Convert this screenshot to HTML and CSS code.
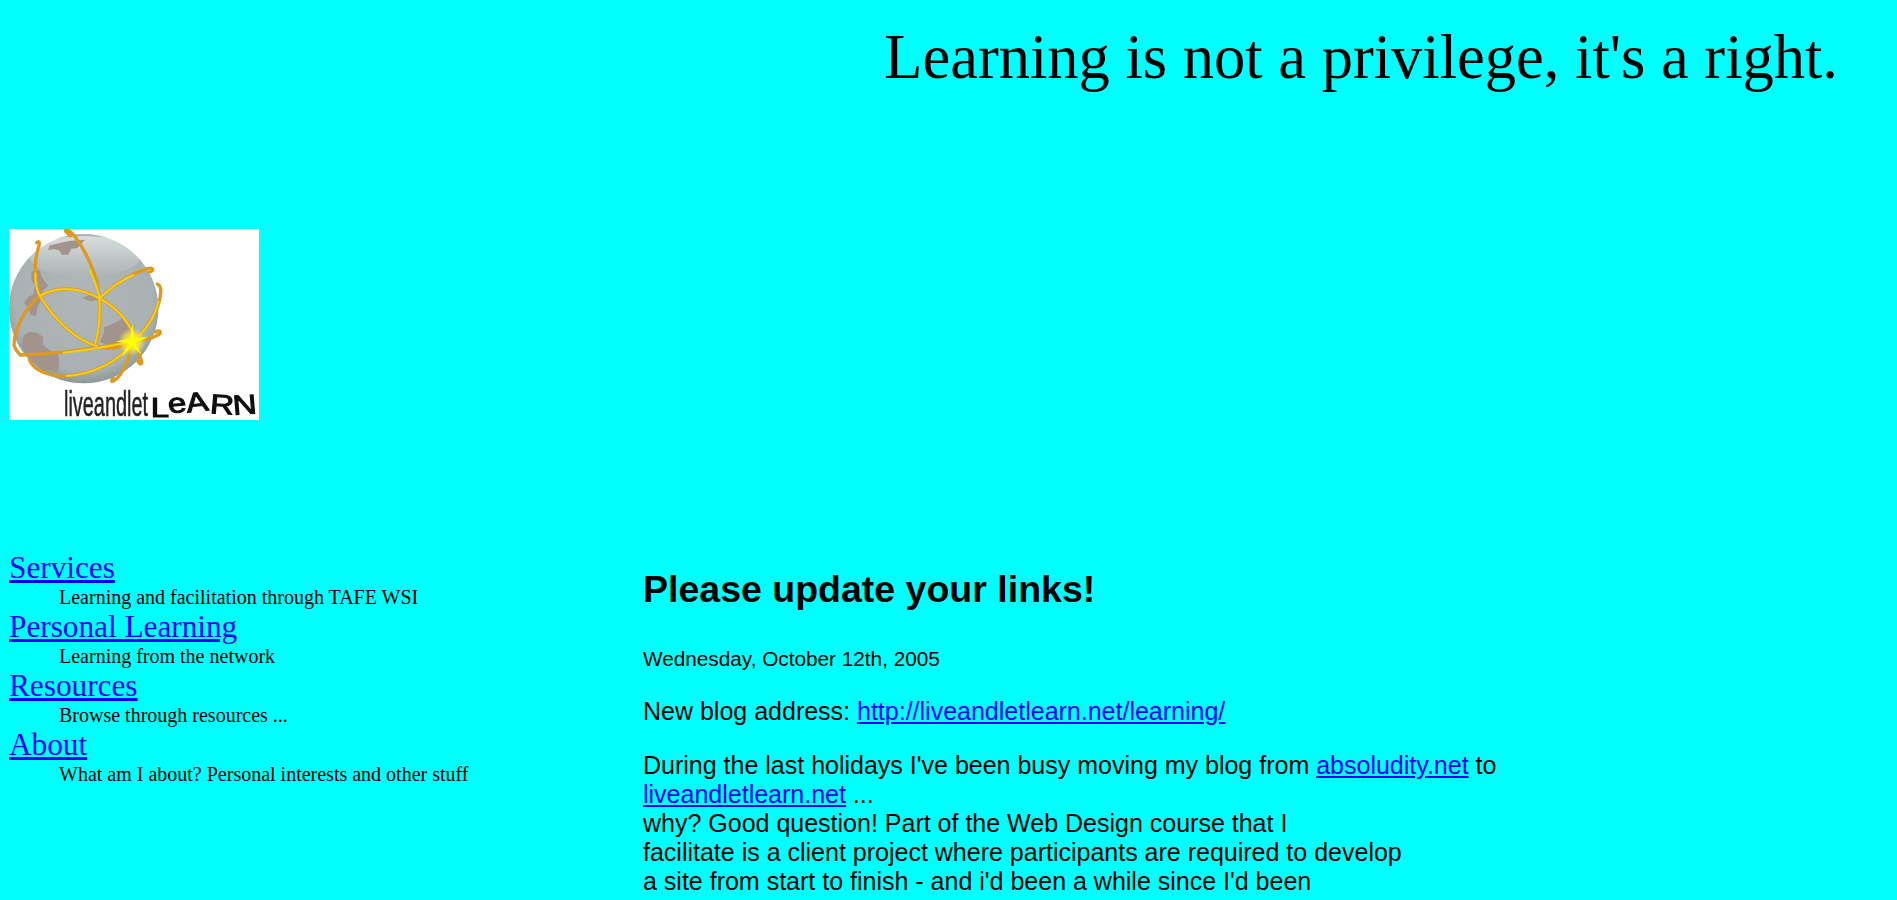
FILE: index.html
```html
<!DOCTYPE html>
<html lang="en">
<head>
<meta charset="utf-8">
<title>Live and Let Learn</title>
<link rel="stylesheet" href="styles.css">
</head>
<body>
<header class="banner">
  <h1 class="motto">Learning is not a privilege, it's a right.</h1>
</header>
<div class="logo-row">
  <svg class="logo" viewBox="27 27 750 573" width="250" height="191" role="img" aria-label="live and let learn logo">
    <defs>
      <radialGradient id="globe" cx="50%" cy="45%" r="55%">
        <stop offset="0" stop-color="#aeb6b7"/>
        <stop offset="0.85" stop-color="#a9b1b2"/>
        <stop offset="1" stop-color="#8e9797"/>
      </radialGradient>
      <linearGradient id="shine" x1="0" y1="0" x2="0" y2="1">
        <stop offset="0" stop-color="#fff" stop-opacity=".55"/>
        <stop offset="1" stop-color="#fff" stop-opacity="0"/>
      </linearGradient>
      <radialGradient id="flare">
        <stop offset="0" stop-color="#ffff00"/>
        <stop offset="0.55" stop-color="#fff030" stop-opacity=".75"/>
        <stop offset="1" stop-color="#ffe060" stop-opacity="0"/>
      </radialGradient>
      <filter id="soft" x="-5%" y="-5%" width="110%" height="110%">
        <feGaussianBlur stdDeviation="2.2"/>
      </filter>
    </defs>
    <rect x="27" y="27" width="750" height="573" fill="#fff"/>
    <g filter="url(#soft)">
      <circle cx="251" cy="266" r="224" fill="url(#globe)"/>
      <ellipse cx="255" cy="110" rx="165" ry="62" fill="url(#shine)"/>
      <g fill="#a2938c">
        <path d="M143 90 150 76 178 70 210 62 255 60 240 74 232 84 214 86 205 104 186 104 176 90 160 88Z"/>
        <path d="M95 155 118 150 125 172 136 185 145 198 128 212 122 240 112 262 108 288 92 284 84 262 72 250 84 232 100 222 105 195 94 180Z"/>
        <path d="M72 345 88 335 112 338 130 352 128 374 148 390 175 405 178 430 172 458 150 450 125 448 105 425 82 410 70 385 64 370Z"/>
        <path d="M300 365 312 338 312 322 338 312 352 305 370 292 382 318 396 340 385 372 350 375 325 378Z"/>
        <path d="M246 234 270 224 288 228 296 240 272 244Z"/>
      </g>
      <g fill="none" stroke="#dc9a22" stroke-width="10" stroke-linecap="round">
        <path d="M110 68C118 60 120 70 116 80 100 130 102 190 122 232 160 295 225 360 290 378 330 392 370 382 396 365 440 330 478 270 482 220 484 205 478 195 472 192"/>
        <path d="M212 48C200 38 192 32 198 30 208 28 226 48 245 80 275 130 295 185 298 235 302 290 298 340 285 376"/>
        <path d="M298 235C340 195 395 160 445 145 462 142 462 152 448 156"/>
        <path d="M62 405C56 400 46 390 42 375 42 330 75 260 122 226 180 195 245 205 298 235 350 262 395 310 406 365 412 395 425 415 425 430 422 436 415 428 412 420"/>
        <path d="M62 405C170 402 290 385 396 365 430 360 470 352 480 340 484 330 472 332 466 336"/>
        <path d="M88 420C100 450 145 470 200 468 280 462 360 425 396 365"/>
        <path d="M396 365C388 415 370 460 345 480 335 488 330 482 340 475"/>
      </g>
      <g fill="none" stroke="#f4cf12" stroke-width="6" stroke-linecap="round">
        <path d="M106 160C106 190 110 215 122 232 160 295 225 360 290 378"/>
        <path d="M270 150C285 185 296 210 298 235 301 280 298 330 286 370"/>
        <path d="M298 235C340 195 370 178 400 165"/>
        <path d="M122 226C180 195 245 205 298 235 350 262 395 310 406 365"/>
        <path d="M190 398C260 392 330 378 396 365"/>
        <path d="M200 468C280 462 360 425 396 365"/>
        <path d="M396 365C440 330 465 290 475 245"/>
      </g>
      <circle cx="396" cy="365" r="42" fill="url(#flare)"/>
      <path d="M397 312 403 355 445 350 406 368 425 405 397 378 365 412 386 368 348 365 390 355Z" fill="#ffff00"/>
    </g>
    <g filter="url(#soft)">
      <text class="logo-live" transform="scale(.574 1)" x="334.5" y="588">liveandlet</text>
      <text class="logo-learn" x="452" y="590" dy="0 -10 -2 2 4" rotate="0 -6 -8 4 -4" textLength="320" lengthAdjust="spacingAndGlyphs">LeARN</text>
    </g>
  </svg>
</div>
<div class="columns">
  <nav class="sidebar">
    <dl class="menu">
      <dt class="menu-title"><a class="menu-link" href="#">Services</a></dt>
      <dd class="menu-desc">Learning and facilitation through TAFE WSI</dd>
      <dt class="menu-title"><a class="menu-link" href="#">Personal Learning</a></dt>
      <dd class="menu-desc">Learning from the network</dd>
      <dt class="menu-title"><a class="menu-link" href="#">Resources</a></dt>
      <dd class="menu-desc">Browse through resources ...</dd>
      <dt class="menu-title"><a class="menu-link" href="#">About</a></dt>
      <dd class="menu-desc">What am I about? Personal interests and other stuff</dd>
    </dl>
  </nav>
  <main class="post">
    <h2 class="post-title">Please update your links!</h2>
    <p class="post-date">Wednesday, October 12th, 2005</p>
    <p class="post-text">New blog address: <a href="#">http://liveandletlearn.net/learning/</a></p>
    <p class="post-text">During the last holidays I've been busy moving my blog from <a href="#">absoludity.net</a> to <a href="#">liveandletlearn.net</a> ...<br>
    why? Good question! Part of the Web Design course that I<br>
    facilitate is a client project where participants are required to develop<br>
    a site from start to finish - and i'd been a while since I'd been</p>
  </main>
</div>
</body>
</html>
```

FILE: styles.css
```css
html, body {
  height: 100%;
  overflow: hidden;
}
body {
  margin: 0;
  padding: 0 9px;
  background: #00ffff;
  color: #000;
  font-family: "Liberation Serif", serif;
  font-size: 25px;
}
a {
  color: #0000ff;
}
.banner {
  display: flex;
  justify-content: flex-end;
  padding-right: 50px;
}
.motto {
  margin: 20px 0 0;
  font-size: 62.5px;
  font-weight: normal;
  line-height: 74px;
}
.logo-row {
  padding-top: 135px;
}
.logo {
  display: block;
  overflow: visible;
}
.logo-live {
  font-family: "Liberation Sans", sans-serif;
  font-size: 104px;
  fill: #222;
  stroke: #222;
  stroke-width: 1.5;
}
.logo-learn {
  font-family: "Liberation Sans", sans-serif;
  font-size: 82px;
  fill: #111;
  stroke: #111;
  stroke-width: 3;
}
.columns {
  display: flex;
  padding-top: 130px;
}
.sidebar {
  width: 634px;
  flex: none;
}
.menu {
  margin: 0;
}
.menu-title {
  font-size: 31.25px;
}
.menu-link {
  text-decoration-thickness: 3px;
}
.menu-desc {
  margin: 0 0 0 50px;
  font-size: 20px;
}
.post {
  width: 860px;
  font-family: "Liberation Sans", sans-serif;
  padding-top: 18px;
}
.post-title {
  margin: 0 0 36px;
  font-size: 37.5px;
}
.post-date {
  margin: 0 0 26px;
  font-size: 20.75px;
}
.post-text {
  margin: 0 0 25px;
  font-size: 25px;
  line-height: 29px;
}
```
